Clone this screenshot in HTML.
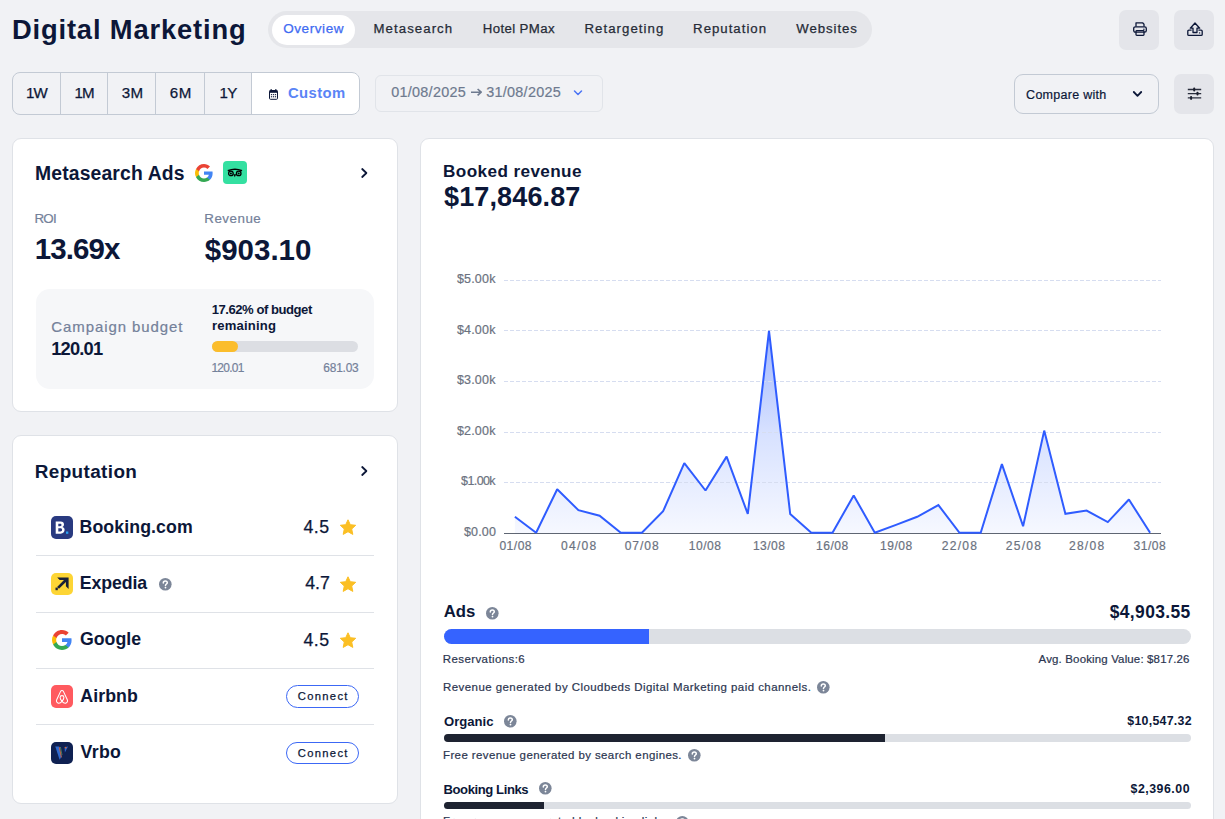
<!DOCTYPE html>
<html><head><meta charset="utf-8"><title>Digital Marketing</title>
<style>
html,body{margin:0;padding:0}
body{width:1225px;height:819px;overflow:hidden;position:relative;background:#f1f2f5;font-family:"Liberation Sans",sans-serif}
.t{position:absolute;white-space:nowrap}
.b{position:absolute;display:block}
</style></head><body>
<div class="b" style="left:268.0px;top:11.0px;width:604.0px;height:37.0px;background:#e5e6ea;border-radius:19px"></div>
<div class="b" style="left:272.0px;top:15.0px;width:83.0px;height:30.0px;background:#fff;border-radius:15px"></div>
<div class="b" style="left:251.0px;top:72.0px;width:109.0px;height:43.0px;background:#fff;border-radius:0 8px 8px 0"></div>
<div class="b" style="left:12.0px;top:72.0px;width:348.0px;height:43.0px;border:1px solid #c3cad4;border-radius:8px;box-sizing:border-box"></div>
<div class="b" style="left:60.0px;top:72.0px;width:1.0px;height:43.0px;background:#c3cad4"></div>
<div class="b" style="left:107.0px;top:72.0px;width:1.0px;height:43.0px;background:#c3cad4"></div>
<div class="b" style="left:155.0px;top:72.0px;width:1.0px;height:43.0px;background:#c3cad4"></div>
<div class="b" style="left:204.0px;top:72.0px;width:1.0px;height:43.0px;background:#c3cad4"></div>
<div class="b" style="left:251.0px;top:72.0px;width:1.0px;height:43.0px;background:#c3cad4"></div>
<svg class="b" style="left:269.0px;top:89.0px" width="9" height="11" viewBox="0 0 9 11"><rect x="0.5" y="1.5" width="8" height="8.8" rx="1" fill="none" stroke="#0c1738" stroke-width="1"/><rect x="0.5" y="1.5" width="8" height="2.3" fill="#0c1738"/><rect x="1.6" y="0" width="1.1" height="2.2" fill="#0c1738"/><rect x="6.3" y="0" width="1.1" height="2.2" fill="#0c1738"/><g fill="#0c1738"><rect x="1.9" y="5.1" width="1.2" height="1.1"/><rect x="3.9" y="5.1" width="1.2" height="1.1"/><rect x="5.9" y="5.1" width="1.2" height="1.1"/><rect x="1.9" y="7.2" width="1.2" height="1.1"/><rect x="3.9" y="7.2" width="1.2" height="1.1"/><rect x="5.9" y="7.2" width="1.2" height="1.1"/></g></svg>
<div class="b" style="left:375.0px;top:75.0px;width:228.0px;height:37.0px;border:1px solid #e1e4e9;border-radius:6px;box-sizing:border-box"></div>
<svg class="b" style="left:573.0px;top:89.0px" width="10" height="8" viewBox="0 0 10 8"><path d="M1.5 2 L5 5.5 L8.5 2" fill="none" stroke="#4a74f5" stroke-width="1.5" stroke-linecap="round" stroke-linejoin="round"/></svg>
<svg class="b" style="left:470.0px;top:88.0px" width="13" height="8" viewBox="0 0 13 8"><path d="M1 4.2 H11 M7.6 1 L11.2 4.2 L7.6 7.4" fill="none" stroke="#6e7a8f" stroke-width="1.6" stroke-linejoin="round"/></svg>
<div class="b" style="left:1119.0px;top:10.0px;width:40.0px;height:40.0px;background:#e4e5ea;border-radius:7px"></div>
<div class="b" style="left:1174.0px;top:10.0px;width:40.0px;height:40.0px;background:#e4e5ea;border-radius:7px"></div>
<svg class="b" style="left:1132.5px;top:22.0px" width="14" height="14" viewBox="0 0 14 14"><g fill="none" stroke="#0c1738" stroke-width="1.3" stroke-linejoin="round"><path d="M3 4.6 V0.8 H9.6 L11 2.2 V4.6"/><rect x="0.7" y="4.8" width="12.6" height="5.4" rx="1.6"/><rect x="3" y="8.6" width="8" height="4.7" rx="0.8"/></g><circle cx="10.9" cy="7.2" r="0.7" fill="#0c1738"/></svg>
<svg class="b" style="left:1186.5px;top:22.0px" width="16" height="14" viewBox="0 0 16 14"><g fill="none" stroke="#0c1738" stroke-width="1.3" stroke-linejoin="round"><path d="M3.3 6.2 L8 1 L12.7 6.2 H10 V10.5 H6 V6.2 Z"/><path d="M4.6 8.2 H1.9 Q0.8 8.2 0.8 9.3 V12.4 Q0.8 13.3 1.9 13.3 H14.1 Q15.2 13.3 15.2 12.4 V9.3 Q15.2 8.2 14.1 8.2 H11.4"/></g><circle cx="12.6" cy="10.9" r="0.7" fill="#0c1738"/></svg>
<div class="b" style="left:1014.0px;top:74.0px;width:145.0px;height:40.0px;border:1px solid #c3cad4;border-radius:9px;box-sizing:border-box"></div>
<svg class="b" style="left:1132.0px;top:90.0px" width="11" height="8" viewBox="0 0 11 8"><path d="M1.8 2 L5.5 5.8 L9.2 2" fill="none" stroke="#0c1738" stroke-width="1.8" stroke-linecap="round" stroke-linejoin="round"/></svg>
<div class="b" style="left:1174.0px;top:74.0px;width:40.0px;height:40.0px;background:#e4e5ea;border-radius:7px"></div>
<svg class="b" style="left:1187.0px;top:86.5px" width="15" height="13" viewBox="0 0 15 13"><g stroke="#2a2f3e" stroke-width="1.4"><path d="M0.8 2.5 H14.2 M0.8 6.6 H14.2 M0.8 10.9 H14.2"/></g><g fill="#1a1f2e"><rect x="6.2" y="0.6" width="2" height="3.8" rx="0.9"/><rect x="9.5" y="4.7" width="2" height="3.8" rx="0.9"/><rect x="3.1" y="9" width="2" height="3.8" rx="0.9"/></g></svg>
<div class="b" style="left:12.0px;top:138.0px;width:386.0px;height:274.0px;background:#fff;border:1px solid #dfe2e7;border-radius:9px;box-sizing:border-box"></div>
<div class="b" style="left:12.0px;top:435.0px;width:386.0px;height:369.0px;background:#fff;border:1px solid #dfe2e7;border-radius:9px;box-sizing:border-box"></div>
<div class="b" style="left:420.0px;top:138.0px;width:794.0px;height:722.0px;background:#fff;border:1px solid #dfe2e7;border-radius:9px;box-sizing:border-box"></div>
<svg class="b" style="left:195.0px;top:164.0px" width="18" height="18" viewBox="0 0 24 24"><path d="M23.5 12.3c0-.8-.1-1.6-.2-2.3H12v4.4h6.5c-.3 1.5-1.1 2.7-2.4 3.6v3h3.9c2.2-2.1 3.5-5.1 3.5-8.7z" fill="#4285F4"/><path d="M12 24c3.2 0 6-1.1 7.9-2.9l-3.9-3c-1.1.7-2.4 1.2-4 1.2-3.1 0-5.7-2.1-6.6-4.9H1.4v3.1C3.4 21.4 7.4 24 12 24z" fill="#34A853"/><path d="M5.4 14.4c-.2-.7-.4-1.5-.4-2.4s.1-1.6.4-2.4V6.6H1.4C.5 8.2 0 10 0 12s.5 3.8 1.4 5.4l4-3z" fill="#FBBC05"/><path d="M12 4.8c1.8 0 3.3.6 4.6 1.8l3.4-3.4C17.9 1.2 15.2 0 12 0 7.4 0 3.4 2.6 1.4 6.6l4 3.1c.9-2.8 3.5-4.9 6.6-4.9z" fill="#EA4335"/></svg>
<div class="b" style="left:223.0px;top:161.0px;width:24.0px;height:23.0px;background:#34e0a1;border-radius:4px"></div>
<svg class="b" style="left:225.0px;top:163.0px" width="20" height="19" viewBox="0 0 20 19"><path d="M2.8 7.7 Q10 4.6 17 7.7" fill="none" stroke="#000" stroke-width="1.5"/><g fill="none" stroke="#000" stroke-width="1.3"><circle cx="5.9" cy="10.4" r="2.3"/><circle cx="13.7" cy="10.4" r="2.3"/></g><circle cx="5.9" cy="10.4" r="1"/><circle cx="13.7" cy="10.4" r="1"/><path d="M8.4 11.2 L9.8 14.3 L11.2 11.2 Z"/></svg>
<svg class="b" style="left:359.5px;top:167.0px" width="9" height="12" viewBox="0 0 9 12"><path d="M2.2 2 L6.4 6 L2.2 10" fill="none" stroke="#0c1738" stroke-width="1.8" stroke-linecap="round" stroke-linejoin="round"/></svg>
<div class="b" style="left:36.0px;top:289.0px;width:338.0px;height:100.0px;background:#f6f7f9;border-radius:14px"></div>
<div class="b" style="left:212.0px;top:341.0px;width:146.0px;height:11.0px;background:#dcdee3;border-radius:6px"></div>
<div class="b" style="left:212.0px;top:341.0px;width:26.0px;height:11.0px;background:#fbbd2c;border-radius:6px"></div>
<svg class="b" style="left:359.5px;top:465.0px" width="9" height="12" viewBox="0 0 9 12"><path d="M2.2 2 L6.4 6 L2.2 10" fill="none" stroke="#0c1738" stroke-width="1.8" stroke-linecap="round" stroke-linejoin="round"/></svg>
<div class="b" style="left:36.0px;top:555.0px;width:338.0px;height:1.0px;background:#dfe2e7"></div>
<div class="b" style="left:36.0px;top:612.0px;width:338.0px;height:1.0px;background:#dfe2e7"></div>
<div class="b" style="left:36.0px;top:668.0px;width:338.0px;height:1.0px;background:#dfe2e7"></div>
<div class="b" style="left:36.0px;top:724.0px;width:338.0px;height:1.0px;background:#dfe2e7"></div>
<div class="b" style="left:51.0px;top:516.0px;width:22.0px;height:23.0px;background:#293a80;border-radius:5px"></div>
<svg class="b" style="left:51.0px;top:516.0px" width="22" height="23" viewBox="0 0 22 23"><path d="M4.7 5.6 H9.6 C11.9 5.6 13 6.8 13 8.5 C13 9.7 12.4 10.5 11.5 10.9 C12.8 11.3 13.6 12.3 13.6 13.8 C13.6 16 12.1 17.7 9.6 17.7 H4.7 Z M7.3 7.8 V10.2 H9.1 C10 10.2 10.5 9.7 10.5 9 C10.5 8.3 10 7.8 9.1 7.8 Z M7.3 12.2 V15.4 H9.4 C10.5 15.4 11.1 14.8 11.1 13.8 C11.1 12.8 10.5 12.2 9.4 12.2 Z" fill="#fff" fill-rule="evenodd"/><rect x="15" y="15.5" width="2.3" height="2.3" fill="#2aa4f4"/></svg>
<div class="b" style="left:51.0px;top:573.0px;width:22.0px;height:22.0px;background:#fdd535;border-radius:5px"></div>
<svg class="b" style="left:51.0px;top:573.0px" width="22" height="22" viewBox="0 0 22 22"><path d="M6.2 4.6 H17.6 V16 L14.9 13.3 V8.9 L8 15.8 L6.1 13.9 L13 7 H8.7 Z" fill="#1a2035"/><rect x="4.5" y="14.6" width="2.3" height="2.6" fill="#1a2035"/></svg>
<svg class="b" style="left:52.0px;top:630.0px" width="20" height="20" viewBox="0 0 24 24"><path d="M23.5 12.3c0-.8-.1-1.6-.2-2.3H12v4.4h6.5c-.3 1.5-1.1 2.7-2.4 3.6v3h3.9c2.2-2.1 3.5-5.1 3.5-8.7z" fill="#4285F4"/><path d="M12 24c3.2 0 6-1.1 7.9-2.9l-3.9-3c-1.1.7-2.4 1.2-4 1.2-3.1 0-5.7-2.1-6.6-4.9H1.4v3.1C3.4 21.4 7.4 24 12 24z" fill="#34A853"/><path d="M5.4 14.4c-.2-.7-.4-1.5-.4-2.4s.1-1.6.4-2.4V6.6H1.4C.5 8.2 0 10 0 12s.5 3.8 1.4 5.4l4-3z" fill="#FBBC05"/><path d="M12 4.8c1.8 0 3.3.6 4.6 1.8l3.4-3.4C17.9 1.2 15.2 0 12 0 7.4 0 3.4 2.6 1.4 6.6l4 3.1c.9-2.8 3.5-4.9 6.6-4.9z" fill="#EA4335"/></svg>
<div class="b" style="left:51.0px;top:685.0px;width:22.0px;height:23.0px;background:#ff5a5f;border-radius:5px"></div>
<svg class="b" style="left:51.0px;top:685.0px" width="22" height="23" viewBox="0 0 22 23"><g fill="none" stroke="#fff" stroke-width="1.05" stroke-linejoin="round"><path d="M11 16.4 C9.5 18.1 8 18.4 6.9 18 C5.6 17.5 5.1 16.1 5.7 14.7 L9.6 6.4 C10.1 5.3 11.9 5.3 12.4 6.4 L16.3 14.7 C16.9 16.1 16.4 17.5 15.1 18 C14 18.4 12.5 18.1 11 16.4 Z"/><path d="M11 16.4 C9.8 14.9 9.1 13.5 9.1 12.5 C9.1 11.4 9.9 10.6 11 10.6 C12.1 10.6 12.9 11.4 12.9 12.5 C12.9 13.5 12.2 14.9 11 16.4 Z"/></g></svg>
<div class="b" style="left:51.0px;top:742.0px;width:22.0px;height:22.0px;background:#0f2152;border-radius:5px"></div>
<svg class="b" style="left:51.0px;top:742.0px" width="22" height="22" viewBox="0 0 22 22"><path d="M4.3 4.6 L8.2 4.4 L10.6 14.5 L8.6 17.8 Z" fill="#2f6ad0"/><path d="M8.3 5.2 L10.4 15.5" stroke="#d9622e" stroke-width="1" opacity="0.9"/><path d="M9.4 5 L11 13" stroke="#6cae6a" stroke-width="0.6"/><path d="M13.6 5.2 L17 4.4 L15.2 8 L13.9 10.5 Z" fill="#2f6ad0"/><circle cx="14.6" cy="5.6" r="0.9" fill="#e0642c"/></svg>
<svg class="b" style="left:338.8px;top:519.0px" width="18" height="17" viewBox="0 0 18 17"><path d="M9 0.8 L11.3 5.7 L16.7 6.3 L12.7 10 L13.8 15.4 L9 12.7 L4.2 15.4 L5.3 10 L1.3 6.3 L6.7 5.7 Z" fill="#fbbf24" stroke="#fbbf24" stroke-width="1" stroke-linejoin="round"/></svg>
<svg class="b" style="left:338.8px;top:575.5px" width="18" height="17" viewBox="0 0 18 17"><path d="M9 0.8 L11.3 5.7 L16.7 6.3 L12.7 10 L13.8 15.4 L9 12.7 L4.2 15.4 L5.3 10 L1.3 6.3 L6.7 5.7 Z" fill="#fbbf24" stroke="#fbbf24" stroke-width="1" stroke-linejoin="round"/></svg>
<svg class="b" style="left:338.8px;top:631.5px" width="18" height="17" viewBox="0 0 18 17"><path d="M9 0.8 L11.3 5.7 L16.7 6.3 L12.7 10 L13.8 15.4 L9 12.7 L4.2 15.4 L5.3 10 L1.3 6.3 L6.7 5.7 Z" fill="#fbbf24" stroke="#fbbf24" stroke-width="1" stroke-linejoin="round"/></svg>
<svg class="b" style="left:159.0px;top:578.0px" width="12.6" height="12.6" viewBox="0 0 12.6 12.6"><circle cx="6.3" cy="6.3" r="6.3" fill="#7c8698"/><path d="M4.3 4.9 C4.3 3.6 5.2 2.9 6.3 2.9 C7.5 2.9 8.3 3.6 8.3 4.7 C8.3 6 6.5 6.1 6.5 7.6" fill="none" stroke="#fff" stroke-width="1.5" stroke-linecap="round"/><circle cx="6.5" cy="9.6" r="0.9" fill="#fff"/></svg>
<div class="b" style="left:286.0px;top:685.0px;width:73.0px;height:23.0px;border:1px solid #3c68f5;border-radius:12px;box-sizing:border-box"></div>
<div class="b" style="left:286.0px;top:742.0px;width:73.0px;height:22.0px;border:1px solid #3c68f5;border-radius:12px;box-sizing:border-box"></div>
<svg class="b" style="left:0;top:0" width="1225" height="819" viewBox="0 0 1225 819"><path d="M514.9,533.2 L514.9,516.7 L536.1,532.8 L557.2,489.2 L578.4,510.1 L599.6,515.7 L620.8,532.8 L641.9,532.8 L663.1,511.3 L684.3,463.2 L705.5,490.5 L726.6,456.6 L747.8,514.0 L769.0,330.8 L790.2,514.0 L811.3,532.8 L832.5,532.8 L853.7,495.4 L874.8,532.8 L896.0,524.9 L917.2,516.8 L938.4,505.1 L959.5,532.8 L980.7,532.8 L1001.9,464.1 L1023.1,526.2 L1044.2,430.6 L1065.4,513.8 L1086.6,510.5 L1107.8,522.1 L1128.9,499.5 L1150.1,532.8 L1150.1,533.2 Z" fill="url(#ga)"/><defs><linearGradient id="ga" x1="0" y1="0" x2="0" y2="1"><stop offset="0" stop-color="#a0b6fd"/><stop offset="0.5" stop-color="#d7e1ff"/><stop offset="1" stop-color="#f6f8ff"/></linearGradient></defs><line x1="504" y1="280.5" x2="1161" y2="280.5" stroke="#d6ddf0" stroke-width="1" stroke-dasharray="4 2"/><line x1="504" y1="330.5" x2="1161" y2="330.5" stroke="#d6ddf0" stroke-width="1" stroke-dasharray="4 2"/><line x1="504" y1="381.5" x2="1161" y2="381.5" stroke="#d6ddf0" stroke-width="1" stroke-dasharray="4 2"/><line x1="504" y1="432.5" x2="1161" y2="432.5" stroke="#d6ddf0" stroke-width="1" stroke-dasharray="4 2"/><line x1="504" y1="482.5" x2="1161" y2="482.5" stroke="#d6ddf0" stroke-width="1" stroke-dasharray="4 2"/><line x1="504" y1="533.5" x2="1161" y2="533.5" stroke="#5f6673" stroke-width="1"/><polyline points="514.9,516.7 536.1,532.8 557.2,489.2 578.4,510.1 599.6,515.7 620.8,532.8 641.9,532.8 663.1,511.3 684.3,463.2 705.5,490.5 726.6,456.6 747.8,514.0 769.0,330.8 790.2,514.0 811.3,532.8 832.5,532.8 853.7,495.4 874.8,532.8 896.0,524.9 917.2,516.8 938.4,505.1 959.5,532.8 980.7,532.8 1001.9,464.1 1023.1,526.2 1044.2,430.6 1065.4,513.8 1086.6,510.5 1107.8,522.1 1128.9,499.5 1150.1,532.8" fill="none" stroke="#2f5cff" stroke-width="2" stroke-linejoin="miter" stroke-miterlimit="1.5"/></svg>
<div class="b" style="left:444.0px;top:629.0px;width:747.0px;height:15.0px;background:#dcdfe4;border-radius:7.5px;overflow:hidden"></div>
<div class="b" style="left:444.0px;top:629.0px;width:205.0px;height:15.0px;background:#3563ff;border-radius:7.5px 0 0 7.5px"></div>
<div class="b" style="left:444.0px;top:734.0px;width:747.0px;height:8.0px;background:#dcdfe4;border-radius:4px"></div>
<div class="b" style="left:444.0px;top:734.0px;width:441.0px;height:8.0px;background:#1e2331;border-radius:4px 0 0 4px"></div>
<div class="b" style="left:444.0px;top:802.0px;width:747.0px;height:7.0px;background:#dcdfe4;border-radius:3.5px"></div>
<div class="b" style="left:444.0px;top:802.0px;width:100.0px;height:7.0px;background:#1e2331;border-radius:3.5px 0 0 3.5px"></div>
<svg class="b" style="left:486.0px;top:607.0px" width="12.6" height="12.6" viewBox="0 0 12.6 12.6"><circle cx="6.3" cy="6.3" r="6.3" fill="#7c8698"/><path d="M4.3 4.9 C4.3 3.6 5.2 2.9 6.3 2.9 C7.5 2.9 8.3 3.6 8.3 4.7 C8.3 6 6.5 6.1 6.5 7.6" fill="none" stroke="#fff" stroke-width="1.5" stroke-linecap="round"/><circle cx="6.5" cy="9.6" r="0.9" fill="#fff"/></svg>
<svg class="b" style="left:817.0px;top:681.0px" width="12.6" height="12.6" viewBox="0 0 12.6 12.6"><circle cx="6.3" cy="6.3" r="6.3" fill="#7c8698"/><path d="M4.3 4.9 C4.3 3.6 5.2 2.9 6.3 2.9 C7.5 2.9 8.3 3.6 8.3 4.7 C8.3 6 6.5 6.1 6.5 7.6" fill="none" stroke="#fff" stroke-width="1.5" stroke-linecap="round"/><circle cx="6.5" cy="9.6" r="0.9" fill="#fff"/></svg>
<svg class="b" style="left:504.0px;top:715.0px" width="12.6" height="12.6" viewBox="0 0 12.6 12.6"><circle cx="6.3" cy="6.3" r="6.3" fill="#7c8698"/><path d="M4.3 4.9 C4.3 3.6 5.2 2.9 6.3 2.9 C7.5 2.9 8.3 3.6 8.3 4.7 C8.3 6 6.5 6.1 6.5 7.6" fill="none" stroke="#fff" stroke-width="1.5" stroke-linecap="round"/><circle cx="6.5" cy="9.6" r="0.9" fill="#fff"/></svg>
<svg class="b" style="left:688.2px;top:749.2px" width="12.6" height="12.6" viewBox="0 0 12.6 12.6"><circle cx="6.3" cy="6.3" r="6.3" fill="#7c8698"/><path d="M4.3 4.9 C4.3 3.6 5.2 2.9 6.3 2.9 C7.5 2.9 8.3 3.6 8.3 4.7 C8.3 6 6.5 6.1 6.5 7.6" fill="none" stroke="#fff" stroke-width="1.5" stroke-linecap="round"/><circle cx="6.5" cy="9.6" r="0.9" fill="#fff"/></svg>
<svg class="b" style="left:539.2px;top:782.0px" width="12.6" height="12.6" viewBox="0 0 12.6 12.6"><circle cx="6.3" cy="6.3" r="6.3" fill="#7c8698"/><path d="M4.3 4.9 C4.3 3.6 5.2 2.9 6.3 2.9 C7.5 2.9 8.3 3.6 8.3 4.7 C8.3 6 6.5 6.1 6.5 7.6" fill="none" stroke="#fff" stroke-width="1.5" stroke-linecap="round"/><circle cx="6.5" cy="9.6" r="0.9" fill="#fff"/></svg>
<svg class="b" style="left:676.0px;top:815.5px" width="12.6" height="12.6" viewBox="0 0 12.6 12.6"><circle cx="6.3" cy="6.3" r="6.3" fill="#7c8698"/><path d="M4.3 4.9 C4.3 3.6 5.2 2.9 6.3 2.9 C7.5 2.9 8.3 3.6 8.3 4.7 C8.3 6 6.5 6.1 6.5 7.6" fill="none" stroke="#fff" stroke-width="1.5" stroke-linecap="round"/><circle cx="6.5" cy="9.6" r="0.9" fill="#fff"/></svg>
<div class="t" style="left:11.95px;top:16.47px;font-size:27.33px;line-height:27.33px;letter-spacing:0.844px;font-weight:bold;color:#0c1738">Digital Marketing</div>
<div class="t" style="left:283.20px;top:21.76px;font-size:13.52px;line-height:13.52px;letter-spacing:0.571px;-webkit-text-stroke:0.25px currentColor;color:#3f6bf2">Overview</div>
<div class="t" style="left:373.55px;top:21.90px;font-size:13.23px;line-height:13.23px;letter-spacing:1.056px;-webkit-text-stroke:0.25px currentColor;color:#262b37">Metasearch</div>
<div class="t" style="left:482.75px;top:21.90px;font-size:13.23px;line-height:13.23px;letter-spacing:0.389px;-webkit-text-stroke:0.25px currentColor;color:#262b37">Hotel PMax</div>
<div class="t" style="left:584.45px;top:21.90px;font-size:13.23px;line-height:13.23px;letter-spacing:1.050px;-webkit-text-stroke:0.25px currentColor;color:#262b37">Retargeting</div>
<div class="t" style="left:693.10px;top:21.90px;font-size:13.23px;line-height:13.23px;letter-spacing:1.000px;-webkit-text-stroke:0.25px currentColor;color:#262b37">Reputation</div>
<div class="t" style="left:796.25px;top:21.90px;font-size:13.23px;line-height:13.23px;letter-spacing:0.929px;-webkit-text-stroke:0.25px currentColor;color:#262b37">Websites</div>
<div class="t" style="left:25.95px;top:84.90px;font-size:15.12px;line-height:15.12px;letter-spacing:-0.800px;-webkit-text-stroke:0.25px currentColor;color:#0c1738">1W</div>
<div class="t" style="left:74.50px;top:84.90px;font-size:15.12px;line-height:15.12px;letter-spacing:-0.800px;-webkit-text-stroke:0.25px currentColor;color:#0c1738">1M</div>
<div class="t" style="left:121.65px;top:84.90px;font-size:15.12px;line-height:15.12px;letter-spacing:0.500px;-webkit-text-stroke:0.25px currentColor;color:#0c1738">3M</div>
<div class="t" style="left:169.85px;top:84.90px;font-size:15.12px;line-height:15.12px;letter-spacing:0.500px;-webkit-text-stroke:0.25px currentColor;color:#0c1738">6M</div>
<div class="t" style="left:219.60px;top:84.90px;font-size:15.12px;line-height:15.12px;letter-spacing:-0.800px;-webkit-text-stroke:0.25px currentColor;color:#0c1738">1Y</div>
<div class="t" style="left:288.00px;top:86.15px;font-size:14.83px;line-height:14.83px;letter-spacing:0.400px;font-weight:bold;color:#5a84f6">Custom</div>
<div class="t" style="left:391.25px;top:85.42px;font-size:14.39px;line-height:14.39px;letter-spacing:0.278px;-webkit-text-stroke:0.2px currentColor;color:#6e7a8f">01/08/2025</div>
<div class="t" style="left:486.25px;top:85.42px;font-size:14.39px;line-height:14.39px;letter-spacing:0.278px;-webkit-text-stroke:0.2px currentColor;color:#6e7a8f">31/08/2025</div>
<div class="t" style="left:1026.10px;top:88.52px;font-size:12.50px;line-height:12.50px;letter-spacing:0.273px;-webkit-text-stroke:0.2px currentColor;color:#0c1738">Compare with</div>
<div class="t" style="left:35.00px;top:163.84px;font-size:19.33px;line-height:19.33px;letter-spacing:0.154px;font-weight:bold;color:#0c1738">Metasearch Ads</div>
<div class="t" style="left:34.45px;top:211.58px;font-size:13.37px;line-height:13.37px;letter-spacing:-0.750px;-webkit-text-stroke:0.2px currentColor;color:#74819a">ROI</div>
<div class="t" style="left:204.30px;top:211.58px;font-size:13.37px;line-height:13.37px;letter-spacing:0.500px;-webkit-text-stroke:0.2px currentColor;color:#74819a">Revenue</div>
<div class="t" style="left:34.75px;top:233.72px;font-size:29.51px;line-height:29.51px;letter-spacing:-0.900px;font-weight:bold;color:#0c1738">13.69x</div>
<div class="t" style="left:204.80px;top:234.52px;font-size:29.51px;line-height:29.51px;letter-spacing:-0.000px;font-weight:bold;color:#0c1738">$903.10</div>
<div class="t" style="left:51.30px;top:320.43px;font-size:14.97px;line-height:14.97px;letter-spacing:0.929px;-webkit-text-stroke:0.2px currentColor;color:#74819a">Campaign budget</div>
<div class="t" style="left:51.20px;top:340.20px;font-size:18.31px;line-height:18.31px;letter-spacing:-0.800px;font-weight:bold;color:#0c1738">120.01</div>
<div class="t" style="left:211.70px;top:302.93px;font-size:13.08px;line-height:13.08px;letter-spacing:-0.467px;font-weight:bold;color:#0c1738">17.62% of budget</div>
<div class="t" style="left:211.95px;top:318.83px;font-size:13.08px;line-height:13.08px;letter-spacing:0.187px;font-weight:bold;color:#0c1738">remaining</div>
<div class="t" style="left:211.45px;top:362.71px;font-size:11.92px;line-height:11.92px;letter-spacing:-0.700px;-webkit-text-stroke:0.2px currentColor;color:#74819a">120.01</div>
<div class="t" style="left:323.30px;top:362.71px;font-size:11.92px;line-height:11.92px;letter-spacing:-0.200px;-webkit-text-stroke:0.2px currentColor;color:#74819a">681.03</div>
<div class="t" style="left:34.75px;top:463.00px;font-size:18.90px;line-height:18.90px;letter-spacing:0.389px;font-weight:bold;color:#0c1738">Reputation</div>
<div class="t" style="left:79.50px;top:518.69px;font-size:17.73px;line-height:17.73px;letter-spacing:0.100px;font-weight:bold;color:#0c1738">Booking.com</div>
<div class="t" style="left:303.50px;top:519.09px;font-size:17.73px;line-height:17.73px;letter-spacing:0.500px;-webkit-text-stroke:0.25px currentColor;color:#0c1738">4.5</div>
<div class="t" style="left:79.75px;top:574.69px;font-size:17.73px;line-height:17.73px;letter-spacing:-0.083px;font-weight:bold;color:#0c1738">Expedia</div>
<div class="t" style="left:305.20px;top:575.19px;font-size:17.73px;line-height:17.73px;letter-spacing:0.000px;-webkit-text-stroke:0.25px currentColor;color:#0c1738">4.7</div>
<div class="t" style="left:80.00px;top:631.19px;font-size:17.73px;line-height:17.73px;letter-spacing:0.000px;font-weight:bold;color:#0c1738">Google</div>
<div class="t" style="left:303.50px;top:631.59px;font-size:17.73px;line-height:17.73px;letter-spacing:0.500px;-webkit-text-stroke:0.25px currentColor;color:#0c1738">4.5</div>
<div class="t" style="left:80.25px;top:687.69px;font-size:17.73px;line-height:17.73px;letter-spacing:0.100px;font-weight:bold;color:#0c1738">Airbnb</div>
<div class="t" style="left:80.50px;top:743.69px;font-size:17.73px;line-height:17.73px;letter-spacing:0.333px;font-weight:bold;color:#0c1738">Vrbo</div>
<div class="t" style="left:297.80px;top:691.23px;font-size:11.19px;line-height:11.19px;letter-spacing:1.333px;-webkit-text-stroke:0.25px currentColor;color:#0c1738">Connect</div>
<div class="t" style="left:297.80px;top:747.93px;font-size:11.19px;line-height:11.19px;letter-spacing:1.333px;-webkit-text-stroke:0.25px currentColor;color:#0c1738">Connect</div>
<div class="t" style="left:443.10px;top:163.08px;font-size:17.15px;line-height:17.15px;letter-spacing:0.385px;font-weight:bold;color:#0c1738">Booked revenue</div>
<div class="t" style="left:444.10px;top:183.72px;font-size:27.03px;line-height:27.03px;letter-spacing:0.111px;font-weight:bold;color:#0c1738">$17,846.87</div>
<div class="t" style="left:456.90px;top:273.02px;font-size:12.50px;line-height:12.50px;letter-spacing:0.200px;-webkit-text-stroke:0.2px currentColor;color:#6b7280">$5.00k</div>
<div class="t" style="left:456.90px;top:323.62px;font-size:12.50px;line-height:12.50px;letter-spacing:0.200px;-webkit-text-stroke:0.2px currentColor;color:#6b7280">$4.00k</div>
<div class="t" style="left:456.90px;top:374.22px;font-size:12.50px;line-height:12.50px;letter-spacing:0.200px;-webkit-text-stroke:0.2px currentColor;color:#6b7280">$3.00k</div>
<div class="t" style="left:456.90px;top:424.72px;font-size:12.50px;line-height:12.50px;letter-spacing:0.200px;-webkit-text-stroke:0.2px currentColor;color:#6b7280">$2.00k</div>
<div class="t" style="left:461.10px;top:475.32px;font-size:12.50px;line-height:12.50px;letter-spacing:-0.600px;-webkit-text-stroke:0.2px currentColor;color:#6b7280">$1.00k</div>
<div class="t" style="left:464.05px;top:525.92px;font-size:12.50px;line-height:12.50px;letter-spacing:0.125px;-webkit-text-stroke:0.2px currentColor;color:#6b7280">$0.00</div>
<div class="t" style="left:499.40px;top:540.39px;font-size:12.06px;line-height:12.06px;letter-spacing:0.500px;-webkit-text-stroke:0.2px currentColor;color:#6b7280">01/08</div>
<div class="t" style="left:561.02px;top:540.39px;font-size:12.06px;line-height:12.06px;letter-spacing:1.250px;-webkit-text-stroke:0.2px currentColor;color:#6b7280">04/08</div>
<div class="t" style="left:624.64px;top:540.39px;font-size:12.06px;line-height:12.06px;letter-spacing:1.000px;-webkit-text-stroke:0.2px currentColor;color:#6b7280">07/08</div>
<div class="t" style="left:688.76px;top:540.39px;font-size:12.06px;line-height:12.06px;letter-spacing:0.500px;-webkit-text-stroke:0.2px currentColor;color:#6b7280">10/08</div>
<div class="t" style="left:752.88px;top:540.39px;font-size:12.06px;line-height:12.06px;letter-spacing:0.500px;-webkit-text-stroke:0.2px currentColor;color:#6b7280">13/08</div>
<div class="t" style="left:816.00px;top:540.39px;font-size:12.06px;line-height:12.06px;letter-spacing:0.500px;-webkit-text-stroke:0.2px currentColor;color:#6b7280">16/08</div>
<div class="t" style="left:880.12px;top:540.39px;font-size:12.06px;line-height:12.06px;letter-spacing:0.500px;-webkit-text-stroke:0.2px currentColor;color:#6b7280">19/08</div>
<div class="t" style="left:941.74px;top:540.39px;font-size:12.06px;line-height:12.06px;letter-spacing:1.250px;-webkit-text-stroke:0.2px currentColor;color:#6b7280">22/08</div>
<div class="t" style="left:1005.86px;top:540.39px;font-size:12.06px;line-height:12.06px;letter-spacing:1.250px;-webkit-text-stroke:0.2px currentColor;color:#6b7280">25/08</div>
<div class="t" style="left:1068.98px;top:540.39px;font-size:12.06px;line-height:12.06px;letter-spacing:1.250px;-webkit-text-stroke:0.2px currentColor;color:#6b7280">28/08</div>
<div class="t" style="left:1133.60px;top:540.39px;font-size:12.06px;line-height:12.06px;letter-spacing:0.500px;-webkit-text-stroke:0.2px currentColor;color:#6b7280">31/08</div>
<div class="t" style="left:443.80px;top:604.45px;font-size:16.72px;line-height:16.72px;letter-spacing:-0.000px;font-weight:bold;color:#0c1738">Ads</div>
<div class="t" style="left:1109.70px;top:603.94px;font-size:17.44px;line-height:17.44px;letter-spacing:0.375px;font-weight:bold;color:#0c1738">$4,903.55</div>
<div class="t" style="left:442.75px;top:653.78px;font-size:11.48px;line-height:11.48px;letter-spacing:0.423px;-webkit-text-stroke:0.2px currentColor;color:#2b3550">Reservations:6</div>
<div class="t" style="left:1038.60px;top:654.28px;font-size:11.48px;line-height:11.48px;letter-spacing:0.154px;-webkit-text-stroke:0.2px currentColor;color:#2b3550">Avg. Booking Value: $817.26</div>
<div class="t" style="left:443.00px;top:681.98px;font-size:11.48px;line-height:11.48px;letter-spacing:0.452px;-webkit-text-stroke:0.2px currentColor;color:#2b3550">Revenue generated by Cloudbeds Digital Marketing paid channels.</div>
<div class="t" style="left:444.00px;top:714.93px;font-size:13.08px;line-height:13.08px;letter-spacing:0.000px;font-weight:bold;color:#0c1738">Organic</div>
<div class="t" style="left:1127.25px;top:715.25px;font-size:12.35px;line-height:12.35px;letter-spacing:0.278px;font-weight:bold;color:#0c1738">$10,547.32</div>
<div class="t" style="left:443.00px;top:750.08px;font-size:11.48px;line-height:11.48px;letter-spacing:0.400px;-webkit-text-stroke:0.2px currentColor;color:#2b3550">Free revenue generated by search engines.</div>
<div class="t" style="left:443.50px;top:782.63px;font-size:13.08px;line-height:13.08px;letter-spacing:-0.417px;font-weight:bold;color:#0c1738">Booking Links</div>
<div class="t" style="left:1130.60px;top:783.25px;font-size:12.35px;line-height:12.35px;letter-spacing:0.500px;font-weight:bold;color:#0c1738">$2,396.00</div>
<div class="t" style="left:443.00px;top:816.48px;font-size:11.48px;line-height:11.48px;letter-spacing:0.410px;-webkit-text-stroke:0.2px currentColor;color:#2b3550">Free revenue generated by booking links.</div>
</body></html>
